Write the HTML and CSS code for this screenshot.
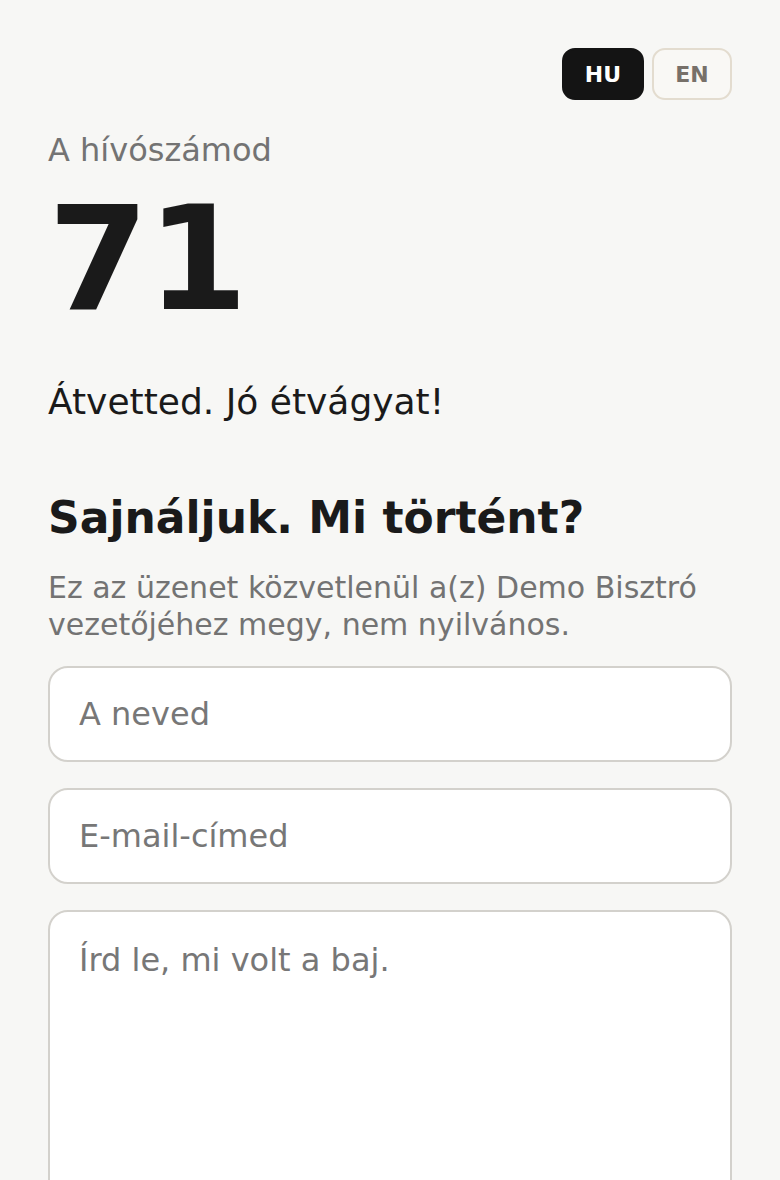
FILE: index.html
```html
<!DOCTYPE html>
<html lang="hu">
<head>
<meta charset="utf-8">
<link rel="stylesheet" href="styles.css">
</head>
<body>
<main class="page">
  <div class="lang">
    <button class="lang-btn active">HU</button>
    <button class="lang-btn">EN</button>
  </div>
  <p class="label">A hívószámod</p>
  <div class="number">71</div>
  <p class="status">Átvetted. Jó étvágyat!</p>
  <h2 class="title">Sajnáljuk. Mi történt?</h2>
  <p class="desc">Ez az üzenet közvetlenül a(z) Demo Bisztró vezetőjéhez megy, nem nyilvános.</p>
  <form class="form">
    <input class="field" type="text" placeholder="A neved">
    <input class="field" type="email" placeholder="E-mail-címed">
    <textarea class="field area" placeholder="Írd le, mi volt a baj."></textarea>
  </form>
</main>
</body>
</html>
```
FILE: styles.css
```css
html, body {
  margin: 0;
  padding: 0;
  background: #f7f7f5;
  font-family: "DejaVu Sans", sans-serif;
  color: #1a1a1a;
}
.page {
  padding: 48px 48px 0;
  display: flex;
  flex-direction: column;
}
.lang {
  display: flex;
  justify-content: flex-end;
  gap: 8px;
}
.lang-btn {
  font-family: "DejaVu Sans", sans-serif;
  font-weight: 700;
  font-size: 22px;
  height: 52px;
  min-width: 80px;
  padding: 0 21px;
  border-radius: 13px;
  border: 2px solid #e3dccf;
  background: #f9f8f5;
  color: #777069;
}
.lang-btn.active {
  background: #141414;
  border-color: #141414;
  color: #ffffff;
}
.label {
  margin: 30px 0 0;
  font-size: 32px;
  line-height: 40px;
  color: #737373;
}
.number {
  font-size: 145px;
  font-weight: 700;
  line-height: 170px;
  letter-spacing: -2px;
  color: #1a1a1a;
  margin-top: 4px;
}
.status {
  margin: 36px 0 0;
  font-size: 36px;
  line-height: 44px;
}
.title {
  margin: 67px 0 0;
  font-size: 44px;
  line-height: 54px;
  font-weight: 700;
}
.desc {
  margin: 24px 0 0;
  font-size: 30px;
  line-height: 37px;
  color: #737373;
}
.form {
  margin-top: 23px;
  display: flex;
  flex-direction: column;
  gap: 26px;
}
.field {
  box-sizing: border-box;
  width: 100%;
  height: 96px;
  border: 2px solid #d3d1cc;
  border-radius: 20px;
  background: #ffffff;
  padding: 0 29px;
  font-family: "DejaVu Sans", sans-serif;
  font-size: 32px;
  color: #1a1a1a;
  outline: none;
}
.field::placeholder {
  color: #777;
}
.area {
  height: 320px;
  padding: 26px 29px;
  resize: none;
  line-height: 44px;
}
```
